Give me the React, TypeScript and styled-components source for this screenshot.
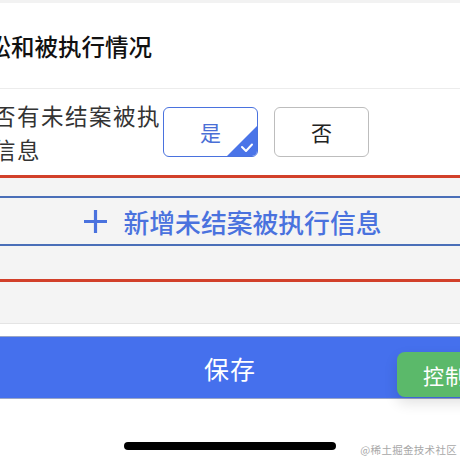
import React from "react";
import styled, { createGlobalStyle } from "styled-components";

const Global = createGlobalStyle`
  html, body { margin: 0; padding: 0; width: 460px; height: 460px; overflow: hidden; background: #fff; }
  body { font-family: "Noto Sans CJK SC", "Noto Sans", sans-serif; }
  #root { width: 460px; height: 460px; overflow: hidden; }
`;

const Page = styled.div`
  width: 460px;
  height: 460px;
  display: flex;
  flex-direction: column;
  position: relative;
  overflow: hidden;
`;

const TopStrip = styled.div`
  height: 3px;
  background: #f2f2f2;
  flex: none;
`;

const TitleBar = styled.div`
  height: 86px;
  flex: none;
  display: flex;
  align-items: center;
  border-bottom: 1px solid #ececec;
  box-sizing: border-box;
`;

const Title = styled.h1`
  margin: 0 0 0 -36px;
  font-size: 23.5px;
  font-weight: 500;
  color: #111;
  white-space: nowrap;
`;

const FormRow = styled.div`
  height: 86px;
  flex: none;
  display: flex;
  align-items: center;
`;

const Label = styled.div`
  width: 194px;
  margin-left: -31px;
  flex: none;
  font-size: 22.5px;
  letter-spacing: 1.5px;
  line-height: 34px;
  color: #333;
`;

const Choices = styled.div`
  display: flex;
  gap: 16px;
`;

const Choice = styled.div<{ $active?: boolean }>`
  position: relative;
  width: 95px;
  height: 50px;
  box-sizing: border-box;
  border: 1.5px solid ${(p) => (p.$active ? "#4a72de" : "#bdbdbd")};
  border-radius: 6px;
  display: flex;
  align-items: center;
  justify-content: center;
  font-size: 21px;
  color: ${(p) => (p.$active ? "#4a6fd6" : "#222")};
  overflow: hidden;
`;

const Corner = styled.div`
  position: absolute;
  right: 0;
  bottom: 0;
  width: 30px;
  height: 30px;
`;

const Section = styled.div`
  flex: none;
  background: #f4f4f4;
  border-top: 3px solid #d2402a;
  border-bottom: 3px solid #d2402a;
  padding: 18px 0 33px;
`;

const AddButton = styled.div`
  height: 50px;
  box-sizing: border-box;
  border-top: 2px solid #4a6fb8;
  border-bottom: 2px solid #4a6fb8;
  display: flex;
  align-items: center;
  justify-content: center;
  gap: 16px;
  color: #4a72de;
  font-size: 25.8px;
  font-weight: 500;
  padding-left: 4px;
`;

const Spacer = styled.div`
  height: 41px;
  flex: none;
  background: #f4f4f4;
  border-bottom: 1px solid #e4e4e4;
`;

const Gap = styled.div`
  height: 12px;
  flex: none;
  background: #fff;
`;

const SaveBar = styled.div`
  height: 63px;
  flex: none;
  box-sizing: border-box;
  background: #4570ed;
  border-top: 1px solid #9aa6c6;
  border-bottom: 1px solid #9aa6c6;
  display: flex;
  align-items: center;
  justify-content: center;
  color: #fff;
  font-size: 25px;
  letter-spacing: 1px;
`;

const Bottom = styled.div`
  flex: 1;
  display: flex;
  align-items: flex-end;
  justify-content: center;
  position: relative;
`;

const HomeIndicator = styled.div`
  width: 212px;
  height: 8px;
  border-radius: 4px;
  background: #000;
  margin-bottom: 10px;
`;

const Watermark = styled.div`
  position: absolute;
  right: 3px;
  bottom: 3px;
  font-size: 10.5px;
  color: #a8a8a8;
  font-family: "Noto Sans CJK SC", serif;
  letter-spacing: 0.3px;
  white-space: nowrap;
`;

const Floating = styled.div`
  position: absolute;
  left: 397px;
  top: 352px;
  width: 100px;
  height: 45px;
  border-radius: 8px;
  background: #5bb96a;
  color: #fff;
  font-size: 21px;
  display: flex;
  align-items: center;
  padding-left: 26px;
  box-sizing: border-box;
  box-shadow: 0 6px 14px rgba(0, 0, 0, 0.12);
  letter-spacing: 1px;
  white-space: nowrap;
`;

export default function App() {
  return (
    <>
      <Global />
      <Page>
        <TopStrip />
        <TitleBar>
          <Title>诉讼和被执行情况</Title>
        </TitleBar>
        <FormRow>
          <Label>是否有未结案被执行信息</Label>
          <Choices>
            <Choice $active>
              是
              <Corner>
                <svg width="30" height="30" viewBox="0 0 30 30">
                  <polygon points="30,0 30,30 0,30" fill="#4a74e8" />
                  <polyline
                    points="15,21 19,25 25,18.5"
                    fill="none"
                    stroke="#fff"
                    strokeWidth="2"
                    strokeLinecap="round"
                    strokeLinejoin="round"
                  />
                </svg>
              </Corner>
            </Choice>
            <Choice>否</Choice>
          </Choices>
        </FormRow>
        <Section>
          <AddButton>
            <svg width="25" height="25" viewBox="0 0 25 25">
              <path d="M12.5 1v23M1 12.5h23" stroke="#4a72de" strokeWidth="3.2" />
            </svg>
            <span>新增未结案被执行信息</span>
          </AddButton>
        </Section>
        <Spacer />
        <Gap />
        <SaveBar>保存</SaveBar>
        <Bottom>
          <HomeIndicator />
          <Watermark>@稀土掘金技术社区</Watermark>
        </Bottom>
        <Floating>控制台</Floating>
      </Page>
    </>
  );
}
